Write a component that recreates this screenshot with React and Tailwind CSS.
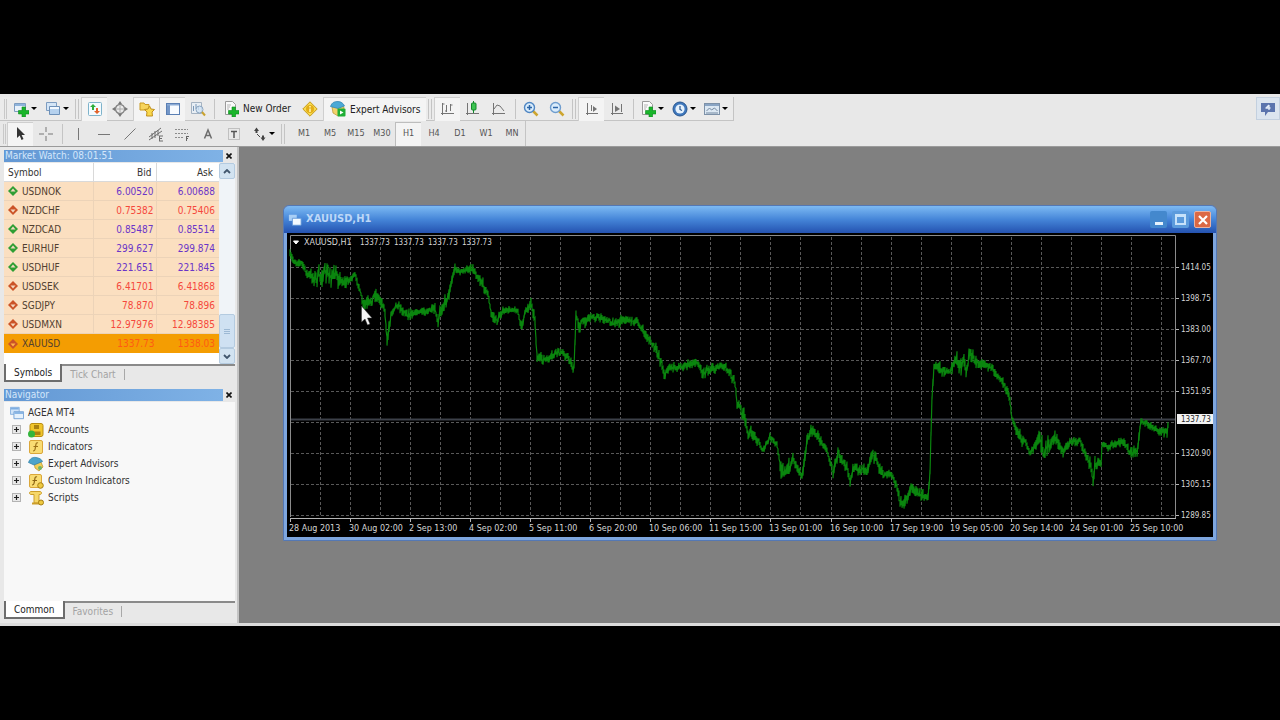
import { useMemo, useState } from "react";

const quotes = [
  { symbol: "USDNOK", bid: "6.00520", ask: "6.00688", up: true },
  { symbol: "NZDCHF", bid: "0.75382", ask: "0.75406", up: false },
  { symbol: "NZDCAD", bid: "0.85487", ask: "0.85514", up: true },
  { symbol: "EURHUF", bid: "299.627", ask: "299.874", up: true },
  { symbol: "USDHUF", bid: "221.651", ask: "221.845", up: true },
  { symbol: "USDSEK", bid: "6.41701", ask: "6.41868", up: false },
  { symbol: "SGDJPY", bid: "78.870", ask: "78.896", up: false },
  { symbol: "USDMXN", bid: "12.97976", ask: "12.98385", up: false },
  { symbol: "XAUUSD", bid: "1337.73", ask: "1338.03", up: false }
];

const timeframes = ["M1", "M5", "M15", "M30", "H1", "H4", "D1", "W1", "MN"];

const priceLabels = ["1414.05", "1398.75", "1383.00", "1367.70", "1351.95", "", "1320.90", "1305.15", "1289.85"];

const timeLabels = [
  "28 Aug 2013", "30 Aug 02:00", "2 Sep 13:00", "4 Sep 02:00", "5 Sep 11:00",
  "6 Sep 20:00", "10 Sep 06:00", "11 Sep 15:00", "13 Sep 01:00", "16 Sep 10:00",
  "17 Sep 19:00", "19 Sep 05:00", "20 Sep 14:00", "24 Sep 01:00", "25 Sep 10:00"
];

const lastBar = ["1337.73", "1337.73", "1337.73", "1337.73"];

// x, y, bar range
const swings = [
  [290, 256, 4], [295, 262, 3], [302, 263, 3], [307, 274, 4], [315, 278, 7], [325, 274, 9], [335, 276, 8],
  [345, 283, 5], [355, 275, 2], [359, 287, 3], [363, 305, 5], [370, 303, 6], [375, 294, 6], [382, 302, 4],
  [385, 312, 3], [387, 343, 4], [389, 328, 6], [391, 314, 3], [396, 304, 4], [407, 314, 5], [418, 312, 3],
  [435, 310, 4], [438, 324, 4], [440, 312, 5], [448, 296, 6], [455, 268, 4], [460, 272, 3], [472, 268, 4],
  [482, 283, 5], [488, 294, 4], [491, 314, 4], [497, 321, 5], [502, 312, 3], [513, 309, 2], [518, 312, 3],
  [521, 327, 4], [525, 313, 5], [531, 302, 5], [535, 320, 4], [537, 358, 4], [548, 360, 4], [558, 351, 4],
  [568, 357, 4], [574, 370, 5], [576, 315, 4], [579, 325, 6], [591, 316, 4], [603, 319, 3], [617, 323, 4],
  [622, 319, 5], [637, 322, 3], [645, 334, 4], [650, 341, 4], [658, 353, 5], [663, 368, 5], [665, 375, 5],
  [668, 368, 4], [680, 367, 3], [697, 362, 4], [703, 373, 5], [707, 369, 5], [725, 366, 3], [735, 382, 5],
  [737, 403, 4], [743, 413, 7], [748, 433, 4], [755, 435, 6], [763, 451, 3], [770, 437, 3], [777, 445, 3],
  [780, 466, 8], [787, 474, 8], [793, 458, 7], [802, 475, 4], [807, 443, 6], [811, 431, 6], [817, 435, 5],
  [827, 450, 3], [833, 473, 4], [838, 453, 5], [847, 466, 5], [850, 480, 5], [853, 469, 4], [867, 468, 5],
  [873, 454, 7], [883, 475, 4], [890, 473, 3], [897, 486, 5], [900, 504, 5], [907, 499, 5], [912, 487, 5],
  [923, 497, 5], [928, 499, 4], [930, 472, 2], [932, 397, 3], [934, 365, 4], [940, 368, 6], [950, 372, 3],
  [955, 360, 9], [967, 366, 9], [970, 355, 8], [978, 363, 5], [985, 365, 3], [995, 370, 4], [1003, 384, 5],
  [1010, 398, 5], [1012, 420, 4], [1020, 437, 7], [1026, 443, 3], [1030, 453, 2], [1039, 440, 9],
  [1043, 452, 10], [1055, 438, 6], [1063, 451, 4], [1070, 442, 3], [1080, 441, 3], [1090, 463, 6],
  [1093, 481, 4], [1095, 464, 5], [1101, 462, 4], [1102, 443, 3], [1107, 448, 3], [1123, 441, 4],
  [1130, 453, 5], [1137, 453, 6], [1141, 421, 3], [1153, 428, 3], [1167, 433, 4], [1169, 418, 3]
];

function buildSeries(points) {
  let seed = 7;
  const random = () => {
    seed = (seed * 16807) % 2147483647;
    return seed / 2147483647;
  };
  const path = [];
  for (let i = 0; i < points.length - 1; i++) {
    const [x0, y0, r0] = points[i];
    const [x1, y1, r1] = points[i + 1];
    for (let x = x0; x < x1; x++) {
      const t = (x - x0) / (x1 - x0);
      const y = y0 + (y1 - y0) * t;
      const range = r0 + (r1 - r0) * t;
      const drift = (random() - 0.5) * range;
      path.push(`${x} ${(y + drift - random() * range - 1).toFixed(1)}`);
      path.push(`${x} ${(y + drift + random() * range + 1).toFixed(1)}`);
    }
  }
  return `M${path.join("L")}`;
}

function Icon({ children, size = "size-4" }) {
  return (
    <svg viewBox="0 0 16 16" className={`${size} shrink-0`} fill="none" aria-hidden="true">
      {children}
    </svg>
  );
}

const plus = <path d="M9 6h3.5v3.5H16V13h-3.5v3H9v-3H5.500V9.500H9z" fill="#19b52a" stroke="#0c8a1c" strokeWidth=".6" />;

const icons = {
  newChart: <><path d="M1.500 2.500h11v8h-11z" fill="#e8f1fa" stroke="#7d9cc0" /><path d="M2 3h10v2H2z" fill="#8fb4dc" />{plus}</>,
  profiles: <><path d="M1.500 1.500h10v8h-10z" fill="#d4e5f6" stroke="#7d9cc0" /><path d="M4.500 5.500h10v8h-10z" fill="#b5d1ee" stroke="#6d90b8" /><path d="M5 6h9v2H5z" fill="#f2f8fe" /></>,
  marketWatch: <><rect x="1.500" y="1.500" width="13" height="13" rx="1" fill="#f4fbff" stroke="#7eb3cb" /><path d="M3 6l3-3 3 3H7v3H5V6z" fill="#2fae3c" /><path d="M7 10h2V7h2v3h2l-3 3z" fill="#e2632c" /></>,
  dataWindow: <><circle cx="8" cy="8" r="4.500" stroke="#858585" strokeWidth="1.500" /><path d="M8 0l2 3H6zM8 16l2-3H6zM0 8l3-2v4zM16 8l-3-2v4z" fill="#777" /><path d="M8 5v6M5 8h6" stroke="#aaa" /></>,
  navigator: <><path d="M1 2h4l1 1.500h4V9H1z" fill="#f7d45b" stroke="#c99a22" /><path d="M10.500 5l1.500 3 3.500.5L13 11l.5 4h-6L8 11 5.500 8.500 9 8z" fill="#f9d84d" stroke="#c08f1c" /></>,
  terminal: <><rect x="1.500" y="2.500" width="13" height="11" fill="#f8fbff" stroke="#5a7fb4" /><path d="M2 3h3v10H2z" fill="#7497c8" /><path d="M2 3h12v1.500H2z" fill="#8baad4" /></>,
  tester: <><path d="M1.500 1.500h10v11h-10z" fill="#e8eef4" stroke="#a5b3c2" /><path d="M3.500 10V5M6 8V3M8.500 9V5" stroke="#7a98b8" /><circle cx="9.500" cy="8.500" r="3.500" fill="#cfe2f4" fillOpacity=".8" stroke="#8ba5c0" /><path d="M12 11l3 3.500" stroke="#c9a22e" strokeWidth="2" /></>,
  order: <><path d="M2.500.5h7l3 3v10h-10z" fill="#fafafa" stroke="#9a9a9a" /><path d="M4 4h4M4 6h3M4 8h2" stroke="#b5b5b5" />{plus}</>,
  metaEditor: <><path d="M8 .8L15.200 8 8 15.200.8 8z" fill="#f6d94f" stroke="#c79a1b" /><circle cx="8" cy="8" r="4" fill="#e3ae17" /><path d="M8 5v1.500M8 7.500V11" stroke="#f9e48c" strokeWidth="2" /></>,
  expert: <><path d="M2 6l6-1.500L14 6l-1 6-5 3-5-3z" fill="#f1d26b" stroke="#b99430" strokeWidth=".7" /><path d="M.5 5.500C2 1 5 .5 8 .5s5.500 2 6.500 4.500L8 7.500z" fill="#4ba9d6" stroke="#2d7fae" strokeWidth=".7" /><rect x="7.500" y="7.500" width="8" height="8" rx="1" fill="#1fae35" /><path d="M10 9.500l3.500 2-3.500 2z" fill="#fff" /></>,
  bars: <path d="M2.500 2v12M1 12.500h13M6.500 4v7M6.500 10H5M10.500 3v7M10.500 4h2M4.500 3h-2" stroke="#747474" />,
  candles: <><path d="M2.500 2v12M1 12.500h13" stroke="#747474" /><path d="M8.500 0v12" stroke="#12882a" /><rect x="6.500" y="2" width="4.500" height="7" rx="1" fill="#3cc451" stroke="#12882a" /></>,
  line: <path d="M2.500 2v12M1 12.500h13M3 8l3-4 3 1 4 5" stroke="#747474" />,
  zoomIn: <><path d="M9.500 9.500l5 5" stroke="#cda52f" strokeWidth="2.500" /><circle cx="6.500" cy="6.500" r="5" fill="#d9ecfb" stroke="#4f86c3" strokeWidth="1.400" /><path d="M4 6.500h5M6.500 4v5" stroke="#2d66a8" strokeWidth="1.500" /></>,
  zoomOut: <><path d="M9.500 9.500l5 5" stroke="#cda52f" strokeWidth="2.500" /><circle cx="6.500" cy="6.500" r="5" fill="#d9ecfb" stroke="#6f9dce" strokeWidth="1.400" /><path d="M4 6.500h5" stroke="#2d66a8" strokeWidth="1.500" /></>,
  autoScroll: <><path d="M3.500 2v12M2 12.500h12M7.500 4v6" stroke="#747474" /><path d="M9 5l4 3-4 3z" fill="#747474" /></>,
  chartShift: <><path d="M3.500 2v12M2 12.500h12M12.500 3v8" stroke="#747474" /><path d="M6 4.500L11 8l-5 3z" fill="#747474" /></>,
  periods: <><circle cx="8" cy="8" r="7" fill="#3f78bd" stroke="#28568f" /><circle cx="8" cy="8" r="4.600" fill="#e6f2fd" /><path d="M8 5v3.500l2 1" stroke="#28568f" strokeWidth="1.200" /></>,
  templates: <><rect x=".5" y="2.500" width="15" height="11" fill="#dce8f3" stroke="#7d91a8" /><path d="M1 3h14v2H1z" fill="#8aa5c4" /><path d="M2.500 10l3-3 2 2 3-2 3 3M2 12h12" stroke="#7388a0" /></>,
  cursor: <path d="M4 1v11l2.700-2.500L8.500 14l2-1-1.900-4H12z" fill="#333" />,
  crosshair: <path d="M8 1v5M8 10v5M1 8h5M10 8h5" stroke="#777" />,
  vline: <path d="M8.500 2v12" stroke="#777" />,
  hline: <path d="M2 8.500h12" stroke="#777" />,
  trend: <path d="M2.500 13.500l11-11" stroke="#777" />,
  channel: <path d="M1 11L13 2M1 14L14 5M4 7v6M7 5v7M10 4v6M11 10h4M11 12.500h3M11 15h4M11.500 10v5" stroke="#6d6d6d" />,
  fibo: <><path d="M1 3.500h13M1 7.500h13M1 11.500h9" stroke="#8c8c8c" strokeDasharray="2 1" /><path d="M12.500 10v5M12.500 10.500H15M12.500 12.500H14" stroke="#666" /></>,
  text: <path d="M4.500 12.500L8 4l3.500 8.500M5.500 9.500h5" stroke="#6d6d6d" strokeWidth="1.500" />,
  label: <><rect x="2.500" y="2.500" width="11" height="11" stroke="#999" strokeDasharray="1 1" /><path d="M5 5.500h6M8 5.500V12" stroke="#555" strokeWidth="1.500" /></>,
  arrows: <><path d="M5.500 1.500L8 5H6.500v2h-2V5H3zM12 15l-2.500-3.500H11v-2h2v2h1.500z" fill="#444" /><path d="M6 8l3 3" stroke="#444" /></>,
  accounts: <><rect x="2" y="1.500" width="13" height="13" rx="2" fill="#f0c52c" stroke="#b98c10" /><path d="M6 3h5v4H6zM4.500 9.500h8V13h-8z" fill="#a98112" /><circle cx="3.500" cy="12" r="3.500" fill="#34b53d" /></>,
  indicator: <><rect x="1.500" y="1.500" width="13" height="13" rx="1.500" fill="#f9dc73" stroke="#dba73a" /><path d="M10 4c-2-1-2 1-2.500 4S7 12 5 12M5.500 7.500H10" stroke="#9c7118" strokeWidth="1.200" /></>,
  advisor: <><path d="M6 6h7l2 5-4 4-4-3z" fill="#f0ce57" stroke="#b38e26" strokeWidth=".7" /><path d="M.5 6.500C2 2 5 1 8 1.500s5.500 1.500 6.500 4L6 9z" fill="#4ba3cb" stroke="#2b7ba4" strokeWidth=".7" /><circle cx="12" cy="12" r="2" fill="#6fb46a" /></>,
  custom: <><rect x="1.500" y="1.500" width="12" height="13" rx="1.500" fill="#f9dc73" stroke="#dba73a" /><path d="M9 4C7 3 7 5 6.500 8S6 12 4 12M4.500 7.500H9" stroke="#8b6414" strokeWidth="1.200" /><circle cx="12.500" cy="12.500" r="2.800" fill="#eec940" stroke="#a67e14" /></>,
  script: <><path d="M3 1.500h9c2 0 2 3 0 3h-1V13H6V4.500H3c-2 0-2-3 0-3z" fill="#f6d768" stroke="#cc9e2a" /><path d="M4 13.500h7" stroke="#cc9e2a" strokeWidth="2" /><circle cx="13" cy="12.500" r="2.500" fill="#eec940" stroke="#a67e14" /></>,
  root: <><path d="M.5 1.500h10v8H.5z" fill="#cfe3f8" stroke="#80abdb" /><path d="M1 2h9v2H1z" fill="#7eaee2" /><path d="M4.500 6.500h11v8h-11z" fill="#e5f1fc" stroke="#6d9dd4" /><path d="M5 7h10v2H5z" fill="#7eaee2" /></>
};

function ToolButton({ icon, label, active = false, menu = false }) {
  return (
    <button
      type="button"
      aria-label={label}
      aria-pressed={active}
      className={`flex h-6 shrink-0 items-center justify-center gap-0.5 ${menu ? "w-8" : "w-[26px]"} ${
        active ? "border-t border-l border-[#cfcfcf] bg-[#f4f4f4]" : ""
      }`}
    >
      <Icon>{icons[icon]}</Icon>
      {menu && <span className="border-x-[3px] border-t-[3px] border-x-transparent border-t-black" />}
    </button>
  );
}

function Divider({ grip = false }) {
  return (
    <span
      className={`h-5 shrink-0 ${
        grip
          ? "mx-0.5 w-1 border-x border-[#c4c4c4]"
          : "mr-0.5 ml-[3px] w-px bg-[#c4c4c4]"
      }`}
    />
  );
}

function Toolbars() {
  const [timeframe, setTimeframe] = useState("H1");

  return (
    <header className="flex items-start justify-between border-b border-[#9a9a9a] bg-[#e8e8e8] pt-[3px] text-[10px] text-[#222]">
      <div className="min-w-0">
        <div className="flex h-6 w-fit items-center border-r border-b border-[#c4c4c4] bg-[#ebebeb] pr-px">
          <span className="mr-0.5 ml-1 h-5 w-[3px] border-x border-[#c8c8c8]" />
          <ToolButton icon="newChart" label="New Chart" menu />
          <ToolButton icon="profiles" label="Profiles" menu />
          <Divider grip />
          <ToolButton icon="marketWatch" label="Market Watch" active />
          <ToolButton icon="dataWindow" label="Data Window" />
          <ToolButton icon="navigator" label="Navigator" active />
          <ToolButton icon="terminal" label="Terminal" active />
          <ToolButton icon="tester" label="Strategy Tester" />
          <Divider />
          <button type="button" className="flex h-6 items-center gap-1 px-1.5">
            <Icon>{icons.order}</Icon>
            New Order
          </button>
          <ToolButton icon="metaEditor" label="MetaEditor" />
          <button type="button" aria-pressed="true" className="flex h-6 items-center gap-1 border-t border-l border-[#cfcfcf] bg-[#f4f4f4] px-1.5">
            <Icon>{icons.expert}</Icon>
            Expert Advisors
          </button>
          <Divider grip />
          <ToolButton icon="bars" label="Bar Chart" active />
          <ToolButton icon="candles" label="Candlesticks" />
          <ToolButton icon="line" label="Line Chart" />
          <Divider />
          <ToolButton icon="zoomIn" label="Zoom In" />
          <ToolButton icon="zoomOut" label="Zoom Out" />
          <Divider grip />
          <ToolButton icon="autoScroll" label="Auto Scroll" active />
          <ToolButton icon="chartShift" label="Chart Shift" />
          <Divider />
          <ToolButton icon="order" label="Indicators" menu />
          <ToolButton icon="periods" label="Periods" menu />
          <ToolButton icon="templates" label="Templates" menu />
        </div>
        <div className="flex h-[25px] w-fit items-center border-r border-[#c4c4c4]">
          <span className="mr-px ml-[3px] h-5 w-[3px] border-x border-[#c8c8c8]" />
          <ToolButton icon="cursor" label="Cursor" active />
          <ToolButton icon="crosshair" label="Crosshair" />
          <Divider />
          <ToolButton icon="vline" label="Vertical Line" />
          <ToolButton icon="hline" label="Horizontal Line" />
          <ToolButton icon="trend" label="Trendline" />
          <ToolButton icon="channel" label="Equidistant Channel" />
          <ToolButton icon="fibo" label="Fibonacci Retracement" />
          <ToolButton icon="text" label="Text" />
          <ToolButton icon="label" label="Text Label" />
          <ToolButton icon="arrows" label="Arrows" menu />
          <Divider grip />
          <div className="flex pl-1">
            {timeframes.map((name) => (
              <button
                key={name}
                type="button"
                aria-pressed={name === timeframe}
                onClick={() => setTimeframe(name)}
                className={`h-6 w-[26px] text-[9px] text-[#555] ${
                  name === timeframe ? "border-t border-l border-[#bdbdbd] bg-[#f4f4f4]" : ""
                }`}
              >
                {name}
              </button>
            ))}
          </div>
        </div>
      </div>
      <button type="button" aria-label="Community" className="flex h-[23px] w-6 shrink-0 items-center justify-center border border-[#c3d0df] bg-[#dce5ef]">
        <Icon>
          <path d="M1 2h14v9H8l-3 4v-4H1z" fill="#5b74ad" />
          <path d="M9 4v5M5.500 7h5M9 4L6 7" stroke="#e3ecf8" strokeWidth="1.300" />
        </Icon>
      </button>
    </header>
  );
}

function PanelTitle({ children }) {
  return (
    <div className="flex h-[14px] items-center">
      <h2 className="h-3 flex-1 bg-linear-to-r from-[#6398d4] to-[#7fb2e6] pl-px text-[10px] leading-3 text-[#d3e6fa]">
        {children}
      </h2>
      <button type="button" aria-label="Close panel" className="flex w-3 justify-center">
        <svg viewBox="0 0 6 6" className="size-[6px]" aria-hidden="true">
          <path d="M.5.5l5 5M5.500.5l-5 5" stroke="#111" strokeWidth="1.600" />
        </svg>
      </button>
    </div>
  );
}

function PanelTabs({ active, other }) {
  return (
    <div className="flex h-[19px] items-start border-t-2 border-[#8a8a8a] text-[10px]">
      <button type="button" className="-mt-0.5 h-[18px] border-r-2 border-b-2 border-l-2 border-[#6d6d6d] bg-white px-2 text-[#222]">
        {active}
      </button>
      <button type="button" className="ml-2 h-4 text-[#a3a3a3]">{other}</button>
      <span className="mt-[3px] ml-2 h-[11px] w-px bg-[#a8a8a8]" />
    </div>
  );
}

function Chevron({ up }) {
  return (
    <button
      type="button"
      aria-label={up ? "Scroll up" : "Scroll down"}
      className="flex h-4 items-center justify-center rounded-xs border border-[#b4cbe0] bg-[#d2e3f1]"
    >
      <svg viewBox="0 0 8 5" className="w-2" fill="none" aria-hidden="true">
        <path d={up ? "M1 4l3-3 3 3" : "M1 1l3 3 3-3"} stroke="#41566d" strokeWidth="1.800" />
      </svg>
    </button>
  );
}

function QuoteRow({ quote, selected }) {
  const price = selected ? "text-[#ff5a14]" : quote.up ? "text-[#6a35c8]" : "text-[#f5483c]";
  const cell = selected ? "" : "border-r border-b border-[#ecd3b8]";

  return (
    <tr className={`h-[19px] ${selected ? "bg-[#f49d02]" : "bg-[#fbdfc0]"}`}>
      <td className={`p-0 pl-1 text-[#51402f] ${cell}`}>
        <span className="flex items-center gap-1">
          <svg viewBox="0 0 10 10" className="size-[10px]" aria-hidden="true">
            <path
              d="M5 0l5 5-5 5-5-5z"
              fill={quote.up ? "#2f9e33" : "#cb5327"}
            />
            <path d={quote.up ? "M5 2.500l2.500 3h-5z" : "M5 7.500l2.500-3h-5z"} fill={selected ? "#ffb347" : "#f3d9c0"} />
          </svg>
          {quote.symbol}
        </span>
      </td>
      <td className={`p-0 pr-0.5 text-right ${price} ${cell}`}>{quote.bid}</td>
      <td className={`p-0 pr-1 text-right ${price} ${selected ? "" : "border-b border-[#ecd3b8]"}`}>{quote.ask}</td>
    </tr>
  );
}

function MarketWatch() {
  return (
    <section>
      <PanelTitle>Market Watch: 08:01:51</PanelTitle>
      <div className="flex bg-white">
        <div className="flex-1 pb-[11px]">
          <table className="w-full table-fixed border-separate border-spacing-0 text-[10px]">
            <thead>
              <tr className="h-[19px] text-[#333]">
                <th className="w-[90px] border-r border-b border-[#d9d9d9] p-0 pl-1 text-left font-normal">Symbol</th>
                <th className="border-r border-b border-[#d9d9d9] p-0 pr-1 text-right font-normal">Bid</th>
                <th className="border-b border-[#d9d9d9] p-0 pr-1.5 text-right font-normal">Ask</th>
              </tr>
            </thead>
            <tbody>
              {quotes.map((quote) => (
                <QuoteRow key={quote.symbol} quote={quote} selected={quote.symbol === "XAUUSD"} />
              ))}
            </tbody>
          </table>
        </div>
        <div className="flex w-4 flex-col bg-[#f0f4f8]">
          <Chevron up />
          <div className="flex flex-1 flex-col justify-end">
            <div className="flex h-[34px] flex-col items-center justify-center gap-px rounded-xs border border-[#b4cbe0] bg-[#cfe1f2]">
              <span className="h-px w-1.5 bg-[#9db9d4]" />
              <span className="h-px w-1.5 bg-[#9db9d4]" />
              <span className="h-px w-1.5 bg-[#9db9d4]" />
            </div>
          </div>
          <Chevron />
        </div>
      </div>
      <PanelTabs active="Symbols" other="Tick Chart" />
    </section>
  );
}

function TreeItem({ icon, children }) {
  return (
    <li className="flex h-[17px] items-center pl-2">
      <button type="button" aria-label="Expand" className="flex size-[9px] items-center justify-center border border-[#b3b3b3] bg-[#e9e9e9]">
        <svg viewBox="0 0 5 5" className="size-[5px]" aria-hidden="true">
          <path d="M2.500 0v5M0 2.500h5" stroke="#222" strokeWidth="1.200" />
        </svg>
      </button>
      <span className="mr-1 ml-[7px] flex">
        <Icon>{icons[icon]}</Icon>
      </span>
      {children}
    </li>
  );
}

function Navigator() {
  return (
    <section className="flex flex-1 flex-col pt-[5px]">
      <PanelTitle>Navigator</PanelTitle>
      <ul className="min-h-[199px] flex-1 bg-[#f8f8f8] pt-0.5 text-[10px] text-[#333]">
        <li className="flex h-[17px] items-center gap-1 pl-1.5">
          <Icon size="size-[14px]">{icons.root}</Icon>
          AGEA MT4
        </li>
        <TreeItem icon="accounts">Accounts</TreeItem>
        <TreeItem icon="indicator">Indicators</TreeItem>
        <TreeItem icon="advisor">Expert Advisors</TreeItem>
        <TreeItem icon="custom">Custom Indicators</TreeItem>
        <TreeItem icon="script">Scripts</TreeItem>
      </ul>
      <PanelTabs active="Common" other="Favorites" />
    </section>
  );
}

function PriceChart() {
  const series = useMemo(() => buildSeries(swings), []);

  return (
    <svg viewBox="287 233 926 304" className="block w-full bg-black" role="img" aria-label="XAUUSD hourly chart">
      <g stroke="#585858" strokeDasharray="3 2">
        {Array.from({ length: 29 }, (_, i) => (
          <path key={i} d={`M${Math.round(320 + i * 30.03) + 0.5} 237V517`} />
        ))}
        {priceLabels.map((_, i) => (
          <path key={i} d={`M291 ${Math.round(266.5 + i * 31.1) + 0.5}H1175`} />
        ))}
      </g>
      <path d="M291 419.500H1175" stroke="#3c4049" strokeWidth="2" />
      <path d="M290.500 517V235.500H1175.500V518" stroke="#8b8b8b" fill="none" />
      <path d="M290 518.500H1176" stroke="#b5b5b5" />
      <path d={series} fill="none" stroke="#0a860e" strokeWidth="1.200" />
      <g fill="#d6d6d6" fontSize="8">
        <path d="M293.500 241h5l-2.500 3z" fill="#fff" stroke="#fff" />
        <g className="font-['DejaVu_Sans',sans-serif]">
          <text x="304" y="245">XAUUSD,H1</text>
          {timeLabels.map((label, i) => (
            <text key={label} x={Math.round(289 + i * 60.06)} y="531">{label}</text>
          ))}
        </g>
        {lastBar.map((value, i) => (
          <text key={i} x={360 + i * 34} y="245">{value}</text>
        ))}
        {timeLabels.map((label, i) => (
          <path key={label} d={`M${Math.round(290 + i * 60.06) + 0.5} 519v3`} stroke="#b5b5b5" />
        ))}
        {priceLabels.map((label, i) => label && (
          <g key={label}>
            <path d={`M1176 ${Math.round(266.5 + i * 31.1) + 0.5}h3`} stroke="#b5b5b5" />
            <text x="1181" y={Math.round(269.5 + i * 31.1)}>{label}</text>
          </g>
        ))}
      </g>
      <path d="M1177 414h36v10h-36z" fill="#f2f2f2" />
      <text x="1181" y="422" fill="#222" fontSize="8">1337.73</text>
      <path d="M361.500 306v16l3.500-3 2.500 6 2.500-1-2.500-6h4.500z" fill="#f4f4f4" stroke="#333" strokeWidth=".5" />
    </svg>
  );
}

function ChartWindow() {
  return (
    <section className="absolute top-[58px] left-[44px] w-[934px] rounded-t-md border border-[#5478b4] bg-[#7ea6de] px-[3px] pb-[3px]">
      <div className="-mx-[3px] flex h-[27px] items-center justify-between rounded-t-md bg-linear-to-b from-[#7dbaf3] via-[#4585d8] to-[#2552b0] pr-[5px] pl-1">
        <h1 className="flex items-center gap-1 text-[11px] font-bold text-[#bcd7f7]">
          <Icon size="size-[14px]">
            <path d="M1 2h9v7H1z" fill="#a9cff6" />
            <path d="M5 6h10v8H5z" fill="#f4faff" stroke="#5d93d6" />
          </Icon>
          XAUUSD,H1
        </h1>
        <div className="flex gap-[5px]">
          <button type="button" aria-label="Minimize" className="flex size-[17px] items-end justify-center rounded-xs bg-[#4488cd] pb-[3px]">
            <span className="h-[3px] w-2 bg-[#e6f3fd]" />
          </button>
          <button type="button" aria-label="Maximize" className="flex size-[17px] items-center justify-center rounded-xs bg-[#5c9bdc]">
            <span className="size-[11px] border-2 border-t-[3px] border-[#c7e2fa]" />
          </button>
          <button type="button" aria-label="Close" className="flex size-[17px] items-center justify-center rounded-xs border border-[#e9b3a2] bg-[#dc6844]">
            <svg viewBox="0 0 10 10" className="size-[10px]" aria-hidden="true">
              <path d="M1 1l8 8M9 1L1 9" stroke="#fff" strokeWidth="2.200" />
            </svg>
          </button>
        </div>
      </div>
      <PriceChart />
    </section>
  );
}

export default function App() {
  return (
    <div className="flex min-h-screen items-center overflow-hidden bg-black font-['DejaVu_Sans_Condensed','DejaVu_Sans',sans-serif]">
      <div className="flex w-full flex-col border-b-[3px] border-[#dcdcdc] bg-[#808080]">
        <Toolbars />
        <div className="flex flex-1">
          <aside className="flex w-[239px] shrink-0 flex-col border-r-2 border-[#c4c4c4] bg-[#e8e8e8] pt-0.5 pr-0.5 pb-[3px] pl-1">
            <MarketWatch />
            <Navigator />
          </aside>
          <main className="relative min-w-0 flex-1">
            <ChartWindow />
          </main>
        </div>
      </div>
    </div>
  );
}
